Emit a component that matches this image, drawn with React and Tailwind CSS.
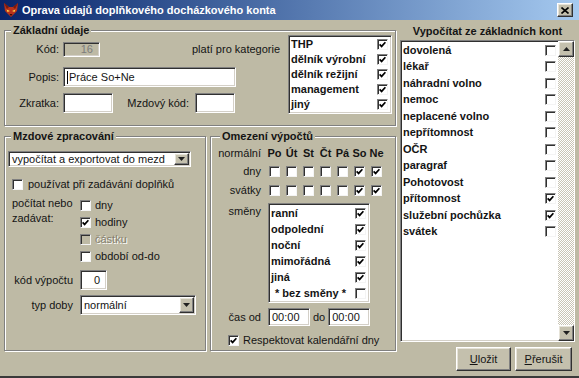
const sunk =
  'border border-t-[#808080] border-l-[#808080] border-b-white border-r-white shadow-[inset_1px_1px_0_#303030,inset_-1px_-1px_0_#d4d0c8]';
const raised =
  'border border-t-white border-l-white border-b-[#303030] border-r-[#303030] shadow-[inset_-1px_-1px_0_#808080,inset_1px_1px_0_#e6e3d8] bg-[#c4c0ad]';

const Check = ({ on, dim }) => (
  <span
    className={`w-[11px] h-[11px] shrink-0 flex items-center justify-center border border-t-[#808080] border-l-[#808080] border-b-[#f4f4f4] border-r-[#f4f4f4] shadow-[inset_1px_1px_0_#303030] ${dim ? 'bg-[#bebaa5]' : 'bg-white'}`}
  >
    {on && (
      <svg width="7" height="7" viewBox="0 0 7 7">
        <path d="M0.6 3.4 L2.6 5.4 L6.4 1.2" fill="none" stroke="#000" strokeWidth="1.7" />
      </svg>
    )}
  </span>
);

const Arrow = ({ up }) => (
  <svg width="7" height="4" viewBox="0 0 7 4">
    <path d={up ? 'M0 4h7L3.5 0z' : 'M0 0h7L3.5 4z'} fill="#202020" />
  </svg>
);

const Select = ({ text, className }) => (
  <div className={`${sunk} bg-white flex items-center ${className}`}>
    <span className="flex-1 pl-[3px] whitespace-nowrap overflow-hidden">{text}</span>
    <span className={`${raised} w-[15px] self-stretch m-[1px] flex items-center justify-center`}>
      <Arrow />
    </span>
  </div>
);

const Group = ({ title, className, legend = 'ml-[6px]', children }) => (
  <fieldset
    className={`border border-[#808080] shadow-[inset_1px_1px_0_#fff,1px_1px_0_#fff] ${className}`}
  >
    <legend className={`${legend} px-[2px] font-bold leading-[13px] bg-[#bebaa5]`}>{title}</legend>
    {children}
  </fieldset>
);

const kategorie = ['THP', 'dělník výrobní', 'dělník režijní', 'management', 'jiný'];
const dny = ['Po', 'Út', 'St', 'Čt', 'Pá', 'So', 'Ne'];
const smeny = [
  ['ranní', true],
  ['odpolední', true],
  ['noční', true],
  ['mimořádná', true],
  ['jiná', true],
  ['* bez směny *', false],
];
const konta = [
  ['dovolená', false],
  ['lékař', false],
  ['náhradní volno', false],
  ['nemoc', false],
  ['neplacené volno', false],
  ['nepřítomnost', false],
  ['OČR', false],
  ['paragraf', false],
  ['Pohotovost', false],
  ['přítomnost', true],
  ['služební pochůzka', true],
  ['svátek', false],
];

const TitleIcon = () => (
  <svg width="16" height="16" viewBox="0 0 16 16">
    <path d="M1 1 L6 5 L10 5 L15 1 L14 9 L8 15 L2 9 Z" fill="#b8321c" />
    <path d="M1 1 L6 5 L4 7 Z M15 1 L10 5 L12 7 Z" fill="#7a1a0c" />
    <path d="M3.5 7.5 L7 9 L4.5 10 Z M12.5 7.5 L9 9 L11.5 10 Z" fill="#ffd24a" />
    <path d="M6.5 12 L8 14 L9.5 12 Z" fill="#3a0a04" />
  </svg>
);

export default function App() {
  return (
    <div className="w-[579px] h-[378px] overflow-hidden flex flex-col bg-[#bebaa5] border-b-2 border-b-[#3a3a3a] font-['Liberation_Sans',Arial,sans-serif] text-[11px] leading-[13px] text-[#141414]">
      <div className="h-[20px] shrink-0 flex items-center pl-[3px] pr-[6px] bg-linear-to-r from-[#0a246a] to-[#a6caf0]">
        <TitleIcon />
        <span className="ml-[3px] flex-1 font-bold text-white whitespace-nowrap">
          Oprava údajů doplňkového docházkového konta
        </span>
        <span className={`${raised} w-[16px] h-[14px] flex items-center justify-center`}>
          <svg width="8" height="7" viewBox="0 0 8 7">
            <path d="M0.5 0.5 L7.5 6.5 M7.5 0.5 L0.5 6.5" stroke="#000" strokeWidth="1.6" />
          </svg>
        </span>
      </div>

      <div className="flex flex-1">
        <div className="ml-[4px] w-[392px] flex flex-col">
          <Group title="Základní údaje" className="mt-[4px] h-[102px]">
            <div className="flex">
              <div className="w-[283px]">
                <div className="mt-[5px] h-[15px] flex items-center">
                  <span className="w-[58px] pr-[4px] text-right">Kód:</span>
                  <div className={`${sunk} w-[37px] h-[15px] flex items-center justify-end pr-[6px] text-[#7c7c7c]`}>16</div>
                  <span className="ml-[92px]">platí pro kategorie</span>
                </div>
                <div className="mt-[10px] h-[20px] flex items-center">
                  <span className="w-[58px] pr-[4px] text-right">Popis:</span>
                  <div className={`${sunk} bg-white w-[173px] h-[20px] flex items-center pl-[3px]`}>
                    <span className="w-[1px] h-[13px] bg-black mr-[1px]" />
                    Práce So+Ne
                  </div>
                </div>
                <div className="mt-[6px] h-[20px] flex items-center">
                  <span className="w-[58px] pr-[4px] text-right">Zkratka:</span>
                  <div className={`${sunk} bg-white w-[50px] h-[20px]`} />
                  <span className="w-[82px] pr-[6px] text-right">Mzdový kód:</span>
                  <div className={`${sunk} bg-white w-[40px] h-[20px]`} />
                </div>
              </div>
              <div className={`${sunk} bg-white w-[104px] h-[79px] -mt-[2px] py-[1px]`}>
                {kategorie.map((k) => (
                  <div key={k} className="h-[15px] flex items-center justify-between pl-[2px] pr-[3px] font-bold">
                    <span>{k}</span>
                    <Check on />
                  </div>
                ))}
              </div>
            </div>
          </Group>

          <div className="mt-[4px] flex gap-[4px]">
            <Group title="Mzdové zpracování" className="w-[202px] h-[221px]">
              <Select text="vypočítat a exportovat do mezd" className="ml-[3px] mt-[8px] w-[183px] h-[16px]" />
              <div className="mt-[11px] ml-[7px] h-[13px] flex items-center gap-[5px]">
                <Check />
                <span>používat při zadávání doplňků</span>
              </div>
              <div className="mt-[6px] flex">
                <div className="w-[75px] pl-[7px] leading-[15px] -mt-[1px]">
                  počítat nebo
                  <br />
                  zadávat:
                </div>
                <div className="flex flex-col">
                  {[
                    ['dny', false, false],
                    ['hodiny', true, false],
                    ['částku', false, true],
                    ['období od-do', false, false],
                  ].map(([t, on, dim]) => (
                    <div key={t} className="h-[17px] flex items-center gap-[4px]">
                      <Check on={on} dim={dim} />
                      <span className={dim ? 'text-[#857f6c] [text-shadow:1px_1px_0_#fff]' : ''}>{t}</span>
                    </div>
                  ))}
                </div>
              </div>
              <div className="mt-[5px] h-[20px] flex items-center">
                <span className="w-[75px] pr-[7px] text-right">kód výpočtu</span>
                <div className={`${sunk} bg-white w-[27px] h-[20px] flex items-center justify-end pr-[6px]`}>0</div>
              </div>
              <div className="mt-[5px] h-[20px] flex items-center">
                <span className="w-[75px] pr-[7px] text-right">typ doby</span>
                <Select text="normální" className="w-[116px] h-[20px]" />
              </div>
            </Group>

            <Group title="Omezení výpočtů" className="w-[186px] h-[221px]" legend="ml-[9px]">
              <div className="mt-[4px] h-[13px] flex items-center">
                <span className="w-[55px] pr-[5px] text-right">normální</span>
                {dny.map((d) => (
                  <span key={d} className="w-[17px] text-center font-bold">{d}</span>
                ))}
              </div>
              {[
                ['dny', 'mt-[5px]'],
                ['svátky', 'mt-[7px]'],
              ].map(([label, mt]) => (
                <div key={label} className={`${mt} h-[12px] flex items-center`}>
                  <span className="w-[55px] pr-[5px] text-right">{label}</span>
                  {dny.map((d, i) => (
                    <span key={d} className="w-[17px] flex justify-center">
                      <Check on={i >= 5} />
                    </span>
                  ))}
                </div>
              ))}
              <div className="mt-[7px] flex">
                <span className="w-[55px] pr-[5px] pt-[2px] text-right">směny</span>
                <div className={`${sunk} bg-white ml-[2px] w-[102px] h-[100px] py-[1px]`}>
                  {smeny.map(([s, on]) => (
                    <div key={s} className="h-[16px] flex items-center justify-between pl-[2px] pr-[3px] font-bold">
                      <span className={on ? '' : 'pl-[4px]'}>{s}</span>
                      <Check on={on} />
                    </div>
                  ))}
                </div>
              </div>
              <div className="mt-[5px] h-[18px] flex items-center">
                <span className="w-[55px] pr-[5px] text-right">čas od</span>
                <div className={`${sunk} bg-white ml-[2px] w-[42px] h-[18px] flex items-center pl-[3px]`}>00:00</div>
                <span className="mx-[3px]">do</span>
                <div className={`${sunk} bg-white w-[42px] h-[18px] flex items-center pl-[3px]`}>00:00</div>
              </div>
              <div className="mt-[8px] ml-[17px] h-[12px] flex items-center gap-[4px]">
                <Check on />
                <span>Respektovat kalendářní dny</span>
              </div>
            </Group>
          </div>
        </div>

        <div className="ml-[4px] w-[175px] flex flex-col">
          <div className="mt-[5px] h-[13px] font-bold text-center whitespace-nowrap">Vypočítat ze základních kont</div>
          <div className={`${sunk} bg-white mt-[2px] h-[302px] flex`}>
            <div className="flex-1 pl-[2px] pr-[2px] pt-[1px]">
              {konta.map(([k, on]) => (
                <div key={k} className="h-[16.5px] flex items-center justify-between font-bold">
                  <span>{k}</span>
                  <Check on={on} />
                </div>
              ))}
            </div>
            <div className="w-[16px] flex flex-col">
              <span className={`${raised} h-[16px] flex items-center justify-center`}>
                <Arrow up />
              </span>
              <span className="flex-1 bg-[image:repeating-conic-gradient(#ffffff_0_25%,#c9c5b5_0_50%)] bg-[length:2px_2px]" />
              <span className={`${raised} h-[16px] flex items-center justify-center`}>
                <Arrow />
              </span>
            </div>
          </div>
          <div className="mt-[5px] flex justify-end gap-[4px] pr-[3px]">
            <button className={`${raised} w-[55px] h-[24px] flex items-center justify-center`}>
              <span><span className="underline">U</span>ložit</span>
            </button>
            <button className={`${raised} w-[57px] h-[24px] flex items-center justify-center`}>
              <span><span className="underline">P</span>řerušit</span>
            </button>
          </div>
        </div>
      </div>
    </div>
  );
}
